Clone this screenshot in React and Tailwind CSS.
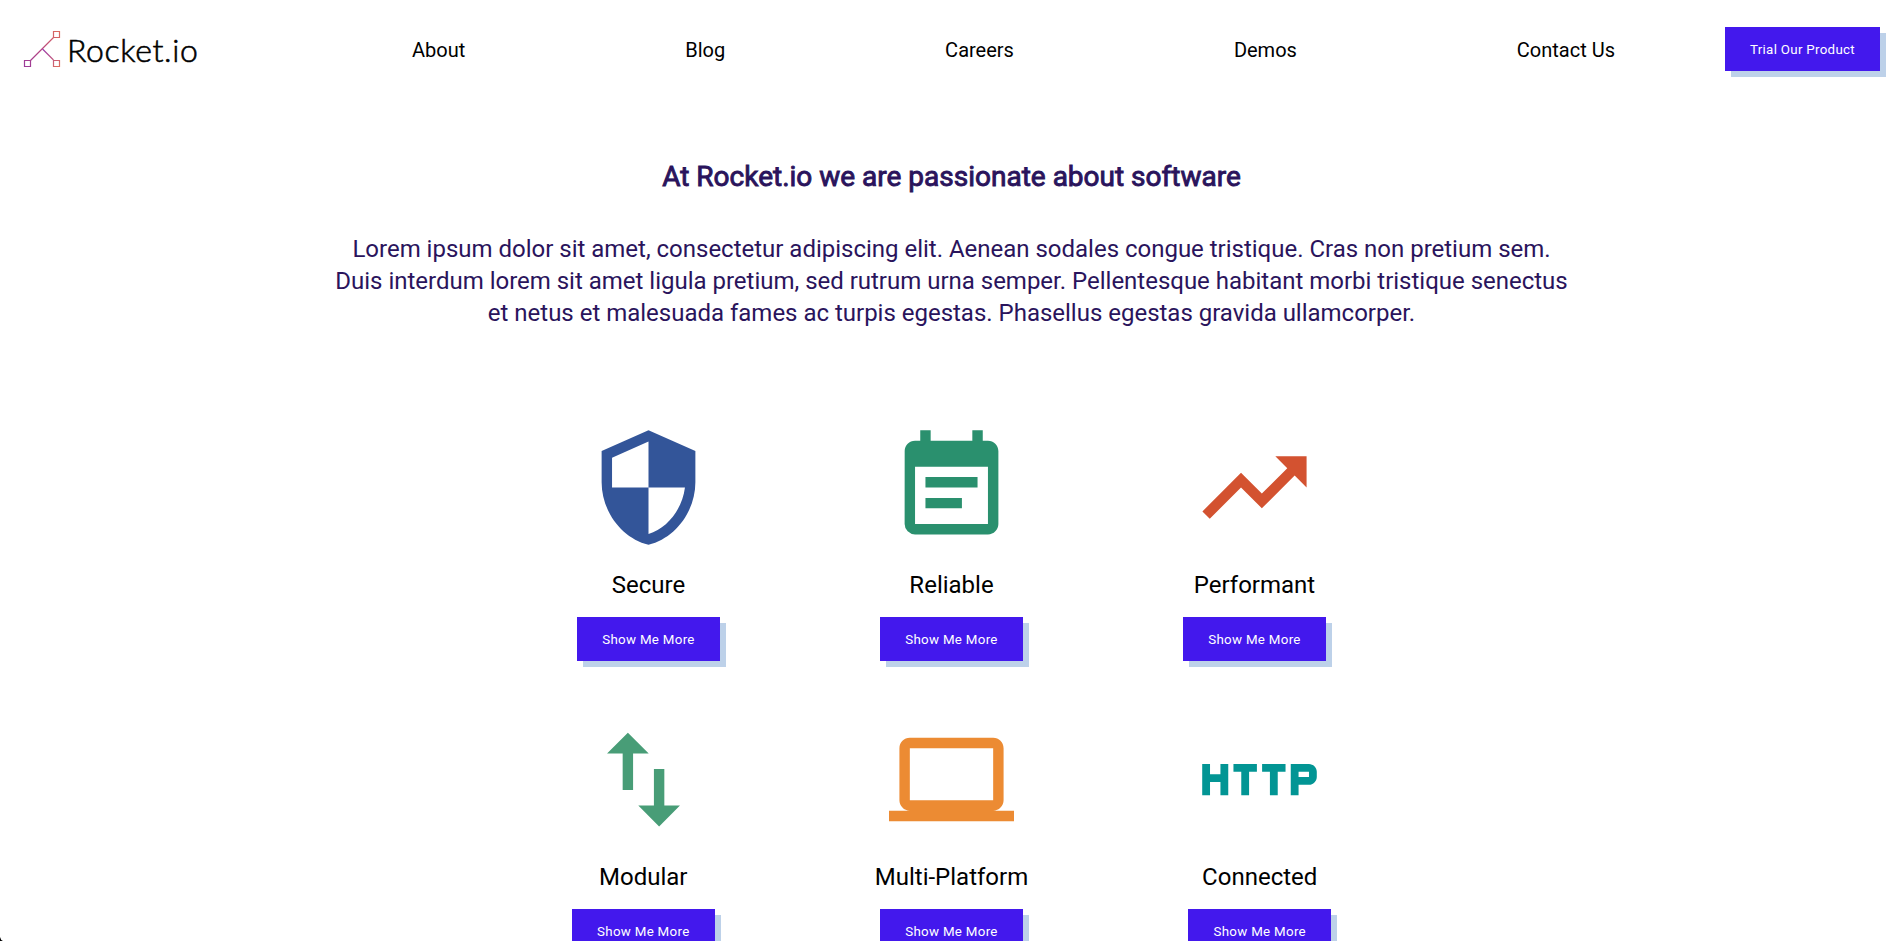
import { MdSecurity, MdEventNote, MdTrendingUp, MdImportExport, MdLaptop, MdHttp } from "react-icons/md";

const links = ["About", "Blog", "Careers", "Demos", "Contact Us"];

const rows = [
  [
    { Icon: MdSecurity, label: "Secure", color: "text-[#335599]" },
    { Icon: MdEventNote, label: "Reliable", color: "text-[#2a906e]" },
    { Icon: MdTrendingUp, label: "Performant", color: "text-[#d35230]" },
  ],
  [
    { Icon: MdImportExport, label: "Modular", color: "text-[#489d77]" },
    { Icon: MdLaptop, label: "Multi-Platform", color: "text-[#ec8b33]" },
    { Icon: MdHttp, label: "Connected", color: "text-[#029594]" },
  ],
];

function Button({ width, children }) {
  return (
    <button className={"h-11 shrink-0 whitespace-nowrap bg-[#4318ed] pt-0.5 text-[13.333px] leading-4 tracking-[0.3px] text-white shadow-[6px_6px_0_#bdd1e9] " + width}>
      {children}
    </button>
  );
}

function Logo() {
  return (
    <div className="flex w-[302px] shrink-0 items-center pl-[23px]">
      <svg width="38" height="38" viewBox="0 0 38 38" fill="none" strokeWidth="1.2">
        <defs>
          <linearGradient id="rise" gradientUnits="userSpaceOnUse" x1="0" y1="38" x2="38" y2="0">
            <stop offset="0" stopColor="#983a9c" />
            <stop offset="0.5" stopColor="#b8467f" />
            <stop offset="1" stopColor="#e0705c" />
          </linearGradient>
          <linearGradient id="fall" gradientUnits="userSpaceOnUse" x1="19" y1="19" x2="37" y2="37">
            <stop offset="0" stopColor="#983ab0" />
            <stop offset="1" stopColor="#e0705c" />
          </linearGradient>
        </defs>
        <path d="M1.5 30.5h6v6h-6zM7.5 30.5L30.5 7.5M30.5 1.5h6v6h-6z" stroke="url(#rise)" />
        <path d="M19.5 19L30.5 30M30.5 30.5h6v6h-6z" stroke="url(#fall)" />
      </svg>
      <span className="ml-[6px] pt-0.5 font-['Lato',sans-serif] text-[32px] font-light leading-[38px] tracking-[0.65px] text-black [-webkit-text-stroke:0.6px_black]">
        Rocket.io
      </span>
    </div>
  );
}

export default function App() {
  return (
    <div className="relative h-[941px] w-full overflow-hidden bg-white font-['Roboto',sans-serif] text-black">
      <header className="flex h-[98px] items-center pr-6">
        <Logo />
        <nav className="flex flex-1 justify-around pt-0.5 text-[20px] leading-6">
          {links.map((l) => (
            <a key={l} href="#">{l}</a>
          ))}
        </nav>
        <Button width="w-[155px]">Trial Our Product</Button>
      </header>
      <section className="mx-auto mt-[62px] w-[1240px] pr-px text-center text-[#2a145c]">
        <h1 className="text-[28px] leading-[34px] [-webkit-text-stroke:0.9px_#2a145c]">
          At Rocket.io we are passionate about software
        </h1>
        <p className="mt-[39px] text-[24px] leading-8 tracking-[-0.01px]">
          Lorem ipsum dolor sit amet, consectetur adipiscing elit. Aenean sodales congue tristique. Cras non pretium sem. Duis interdum lorem sit amet ligula pretium, sed rutrum urna semper. Pellentesque habitant morbi tristique senectus et netus et malesuada fames ac turpis egestas. Phasellus egestas gravida ullamcorper.
        </p>
      </section>
      <main className="mt-24 flex flex-col gap-14 pr-px">
        {rows.map((row, i) => (
          <div key={i} className="flex h-[236px] justify-center gap-40">
            {row.map(({ Icon, label, color }) => (
              <div key={label} className="flex flex-col items-center">
                <Icon className={"h-[125px] w-[125px] shrink-0 " + color} />
                <h2 className="mt-[21px] text-[24px] leading-7">{label}</h2>
                <div className="mt-[18px]">
                  <Button width="w-[143px]">Show Me More</Button>
                </div>
              </div>
            ))}
          </div>
        ))}
      </main>
      <svg className="absolute bottom-0 left-0" width="3" height="4" viewBox="0 0 3 4">
        <path d="M0 0Q0.6 3 3 4H0z" fill="#000" />
      </svg>
    </div>
  );
}
